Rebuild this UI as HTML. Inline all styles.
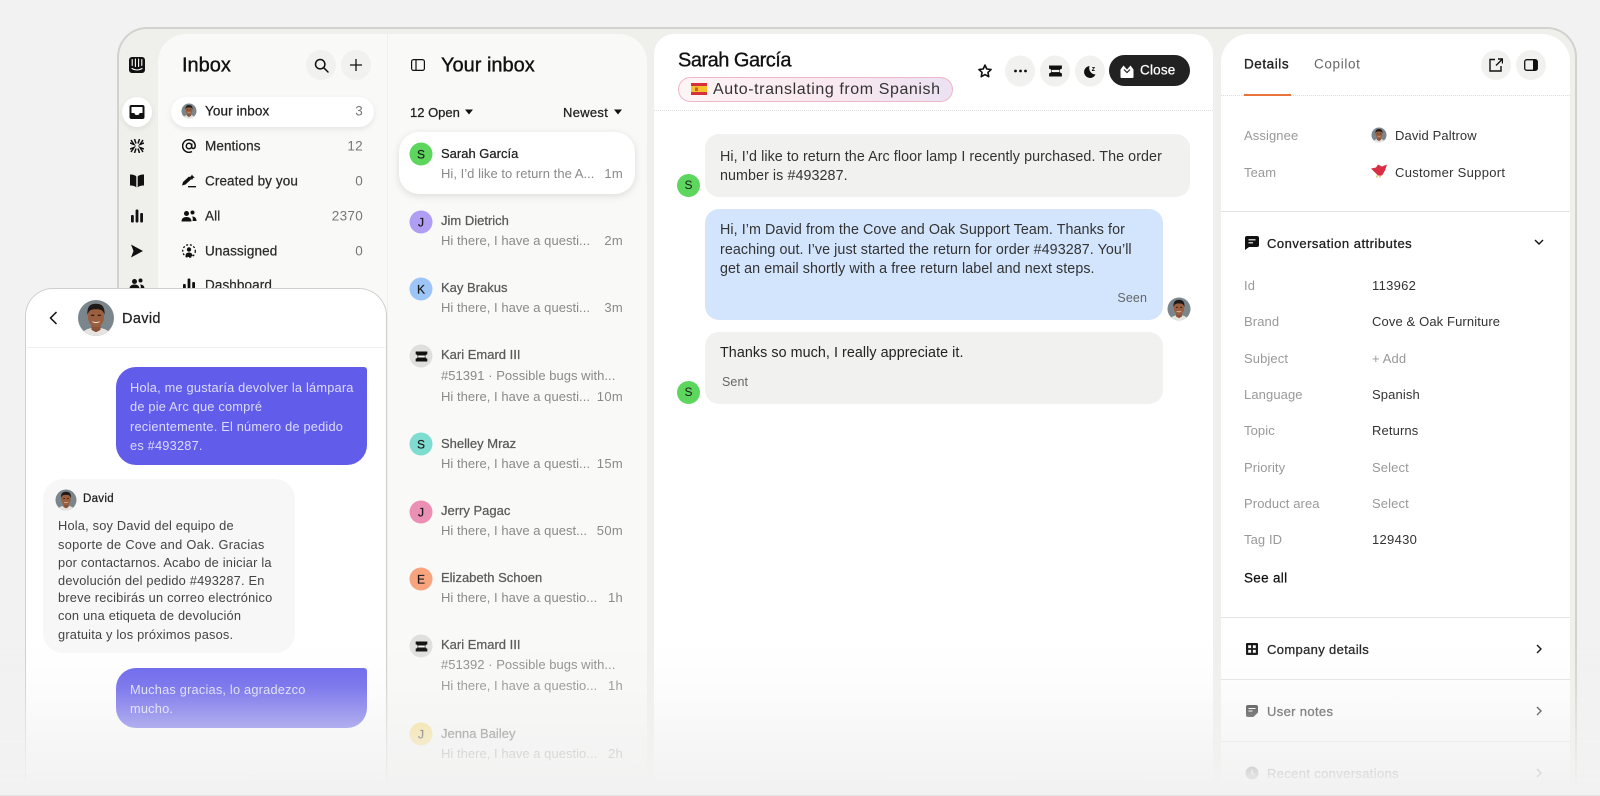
<!DOCTYPE html>
<html><head><meta charset="utf-8"><title>Inbox</title>
<style>
*{box-sizing:border-box}
html,body{margin:0;padding:0;width:1600px;height:796px;overflow:hidden;background:#f2f2f2}
body{position:relative;font-family:"Liberation Sans",sans-serif;color:#1a1a1a}
#w{position:absolute;left:0;top:0;width:1600px;height:796px;overflow:hidden;filter:blur(.3px)}
.a{position:absolute}
.t{position:absolute;white-space:nowrap;transform:translateY(calc(-50% + .7px));line-height:1.2;font-size:13.5px;letter-spacing:.1px}
.r{transform:translate(-100%,calc(-50% + .7px))}
.md{-webkit-text-stroke:.25px currentColor}
.h{font-size:20px;letter-spacing:0;-webkit-text-stroke:.35px currentColor;color:#111}
.c{position:absolute;border-radius:50%;display:flex;align-items:center;justify-content:center}
.btn{width:30px;height:30px;background:#f1f1ef;transform:translate(-50%,-50%)}
svg{display:block}
.ic{position:absolute;transform:translate(-50%,-50%)}
.n{left:205px;color:#2b2b2b}
.ct{left:363px;color:#777;letter-spacing:.3px}
.av{width:23px;height:23px;left:421px;transform:translate(-50%,-50%);font-size:12px;color:#1a1a1a;-webkit-text-stroke:.2px #1a1a1a}
.nm{left:441px;font-size:13px;color:#5a5a5a;-webkit-text-stroke:.25px #5a5a5a;letter-spacing:0}
.sb{left:441px;font-size:13px;color:#8a8a8a;letter-spacing:.03px}
.tm{left:623px;font-size:13px;color:#8a8a8a;letter-spacing:.3px}
.m{font-size:14.3px;color:#333;letter-spacing:.07px}
.bub{position:absolute}
.wt{font-size:12.8px;letter-spacing:.2px}
.l{left:1244px;color:#999;font-size:13px;letter-spacing:.1px}
.v{left:1372px;color:#333;font-size:13px;letter-spacing:.12px}
.s{left:1267px;font-size:13px;-webkit-text-stroke:.3px currentColor;letter-spacing:.35px}
.hr{position:absolute;left:1221px;width:349px;height:1px;background:#e4e4e2}
</style></head><body>
<svg width="0" height="0" style="position:absolute"><defs>
<clipPath id="cc"><circle cx="12" cy="12" r="12"/></clipPath>
<symbol id="face" viewBox="0 0 24 24">
<g clip-path="url(#cc)">
<rect width="24" height="24" fill="#7b868c"/>
<path d="M2 24c1-4 5-5.500 10-5.500s9 1.500 10 5.500z" fill="#e6e4e0"/>
<path d="M9 15h6v5l-3 1.500-3-1.500z" fill="#8a5236"/>
<ellipse cx="12" cy="11" rx="5.400" ry="7.200" fill="#9a5f3e"/>
<path d="M6.300 10C5.800 3.500 9 2.500 12 2.500s6.200 1 5.700 7.500c-1-3-2-3.800-5.700-3.800S7.300 7 6.300 10z" fill="#1f1a18"/>
<path d="M9.300 14c1.500 1 3.900 1 5.400 0-.5 1.800-4.900 1.800-5.400 0z" fill="#f3eee8"/>
<rect x="8.800" y="9.800" width="2" height=".9" fill="#2a1a12"/><rect x="13.200" y="9.800" width="2" height=".9" fill="#2a1a12"/>
</g>
</symbol>
<symbol id="ticket" viewBox="0 0 16 12">
<path d="M1 0h14v3.500a2.500 2.500 0 0 0 0 5V12H1V8.500a2.500 2.500 0 0 0 0-5z" fill="#111"/><rect x="4" y="4.800" width="8" height="2.400" fill="#fff" opacity=".95"/>
</symbol>
</defs></svg>
<div id="w">
<!-- frame -->
<div class="a" style="left:117px;top:27px;width:1460px;height:769px;background:#efefeb;border:2px solid #d2d2ce;border-bottom:none;border-radius:30px 30px 0 0"></div>
<!-- panels -->
<div class="a" style="left:158px;top:34px;width:229px;height:762px;background:#f9f9f7;border-radius:28px 0 0 0"></div>
<div class="a" style="left:388px;top:34px;width:259px;height:762px;background:#f9f9f7;border-radius:0 28px 0 0"></div>
<div class="a" style="left:654px;top:34px;width:559px;height:762px;background:#fff;border-radius:20px 20px 0 0"></div>
<div class="a" style="left:1221px;top:34px;width:349px;height:762px;background:#fff;border-radius:28px 28px 0 0"></div>

<!-- rail -->
<svg class="ic" style="left:137px;top:65px" width="16" height="16" viewBox="0 0 16 16"><rect width="16" height="16" rx="3" fill="#111"/><path d="M3.200 2.500v6M6.400 2v7.500M9.600 2v7.500M12.800 2.500v6" stroke="#fff" stroke-width="1.100" stroke-linecap="round"/><path d="M3 11.500c3 2 7 2 10 0" stroke="#fff" stroke-width="1.100" fill="none" stroke-linecap="round"/></svg>
<div class="c" style="left:122px;top:97px;width:30px;height:30px;background:#fff;box-shadow:0 2px 6px rgba(0,0,0,.08)"></div>
<svg class="ic" style="left:137px;top:112px" width="15" height="14" viewBox="0 0 15 14"><path d="M2 0h11a2 2 0 0 1 2 2v10a2 2 0 0 1-2 2H2a2 2 0 0 1-2-2V2a2 2 0 0 1 2-2z" fill="#111"/><path d="M2 2h11v6H10c0 1.500-1 2-2.500 2S5 9.500 5 8H2z" fill="#fff"/></svg>
<svg class="ic" style="left:137px;top:146px" width="14" height="14" viewBox="0 0 14 14" stroke="#111" stroke-width="1.500" fill="none"><path d="M0 4l4 1.500L1 1M14 4l-4 1.500L13 1M0 10l4-1.500L1 13M14 10l-4-1.500L13 13M4.500 0l1.500 4.500M9.500 0L8 4.500M4.500 14L6 9.500M9.500 14L8 9.500"/></svg>
<svg class="ic" style="left:137px;top:181px" width="14" height="13" viewBox="0 0 14 13"><path d="M0 0c3 0 5 .5 6.300 2v11C5 11.500 3 11 0 11zM14 0c-3 0-5 .5-6.300 2v11c1.300-1.500 3.300-2 6.300-2z" fill="#111"/></svg>
<svg class="ic" style="left:137px;top:216px" width="12" height="13" viewBox="0 0 12 13" fill="#111"><rect y="5.500" width="2.800" height="7.500" rx="1"/><rect x="4.600" width="2.800" height="13" rx="1"/><rect x="9.200" y="3.500" width="2.800" height="9.500" rx="1"/></svg>
<svg class="ic" style="left:137px;top:251px" width="12" height="13" viewBox="0 0 12 13"><path d="M0 0l12 6.500L0 13l2.500-6.500z" fill="#111"/></svg>
<svg class="ic" style="left:137px;top:284px" width="15" height="12" viewBox="0 0 15 12" fill="#111"><circle cx="5" cy="3.500" r="2.500"/><circle cx="11" cy="2.500" r="2"/><path d="M0 11c0-3 2-4.500 5-4.500s5 1.500 5 4.500zM11 11h4c0-3-1.500-4.500-4.500-4.500 1 1 1 2.500.5 4.500z"/></svg>

<!-- inbox column -->
<div class="t h" style="left:182px;top:65px">Inbox</div>
<div class="c btn" style="left:321px;top:65px"><svg width="15" height="15" viewBox="0 0 15 15" fill="none" stroke="#111" stroke-width="1.500"><circle cx="6.200" cy="6.200" r="4.700"/><path d="M9.700 9.700L14 14" stroke-linecap="round"/></svg></div>
<div class="c btn" style="left:356px;top:65px"><svg width="12" height="12" viewBox="0 0 12 12" stroke="#111" stroke-width="1.300"><path d="M6 0v12M0 6h12"/></svg></div>

<div class="a" style="left:171px;top:97px;width:203px;height:30px;background:#fff;border-radius:15px;box-shadow:0 2px 6px rgba(0,0,0,.09)"></div>
<svg class="ic" style="left:189px;top:111px" width="15" height="15"><use href="#face"/></svg>
<div class="t n md" style="top:111px;color:#222">Your inbox</div><div class="t r ct" style="top:111px">3</div>
<svg class="ic" style="left:189px;top:146px" width="14" height="14" viewBox="0 0 14 14" fill="none" stroke="#111" stroke-width="1.500"><circle cx="7" cy="7" r="2.700"/><path d="M9.700 4.500v3.500c0 2.200 3.500 2 3.500-1A6.300 6.300 0 1 0 10 12.500"/></svg>
<div class="t n md" style="top:146px">Mentions</div><div class="t r ct" style="top:146px">12</div>
<svg class="ic" style="left:189px;top:181px" width="14" height="13" viewBox="0 0 14 13" fill="#111"><path d="M0 11l1-3.500L7 2l2.500 2.500L3.500 10zM10 0l1 1.800 1.800 1-1.800 1-1 1.800-1-1.800-1.800-1 1.800-1zM6 11.500h8v1.400H6z"/></svg>
<div class="t n md" style="top:181px">Created by you</div><div class="t r ct" style="top:181px">0</div>
<svg class="ic" style="left:189px;top:216px" width="15" height="12" viewBox="0 0 15 12" fill="#111"><circle cx="5" cy="3.500" r="2.500"/><circle cx="11" cy="2.500" r="2"/><path d="M0 11.500c0-3 2-4.500 5-4.500s5 1.500 5 4.500zM11 11h4c0-3-1.500-4.500-4.500-4.500 1 1 1 2.500.5 4.500z"/></svg>
<div class="t n md" style="top:216px">All</div><div class="t r ct" style="top:216px">2370</div>
<svg class="ic" style="left:189px;top:251px" width="14" height="14" viewBox="0 0 14 14" fill="#111"><circle cx="7" cy="5.500" r="2.200"/><path d="M3.500 12c0-2.500 1.500-3.500 3.500-3.500s3.500 1 3.500 3.500c-2 1.300-5 1.300-7 0z"/><circle cx="7" cy="7" r="6.300" fill="none" stroke="#111" stroke-width="1.300" stroke-dasharray="2 1.800"/></svg>
<div class="t n md" style="top:251px">Unassigned</div><div class="t r ct" style="top:251px">0</div>
<svg class="ic" style="left:189px;top:285px" width="12" height="13" viewBox="0 0 12 13" fill="#111"><rect y="5.500" width="2.800" height="7.500" rx="1"/><rect x="4.600" width="2.800" height="13" rx="1"/><rect x="9.200" y="3.500" width="2.800" height="9.500" rx="1"/></svg>
<div class="t n md" style="top:285px">Dashboard</div>

<!-- list column -->
<svg class="ic" style="left:418px;top:65px" width="14" height="12" viewBox="0 0 14 12" fill="none" stroke="#111" stroke-width="1.200"><rect x=".6" y=".6" width="12.800" height="10.800" rx="2"/><path d="M5 .6v10.800"/></svg>
<div class="t h" style="left:441px;top:65px">Your inbox</div>
<div class="t md" style="left:410px;top:112px;font-size:13px;color:#222;letter-spacing:0">12 Open</div>
<svg class="ic" style="left:469px;top:112px" width="8" height="5"><path d="M0 0h8L4 5z" fill="#111"/></svg>
<div class="t md" style="left:563px;top:112px;font-size:13px;color:#222;letter-spacing:.3px">Newest</div>
<svg class="ic" style="left:618px;top:112px" width="8" height="5"><path d="M0 0h8L4 5z" fill="#111"/></svg>

<div class="a" style="left:399px;top:132px;width:236px;height:62px;background:#fff;border-radius:20px;box-shadow:0 2px 8px rgba(0,0,0,.12)"></div>
<div class="c av" style="top:154px;background:#5cd65c">S</div>
<div class="t nm" style="top:152.500px;color:#222;-webkit-text-stroke-color:#222">Sarah García</div>
<div class="t sb" style="top:173px">Hi, I’d like to return the A...</div><div class="t r tm" style="top:173px">1m</div>

<div class="c av" style="top:222px;background:#b09ef5">J</div>
<div class="t nm" style="top:219.500px">Jim Dietrich</div>
<div class="t sb" style="top:240px">Hi there, I have a questi...</div><div class="t r tm" style="top:240px">2m</div>

<div class="c av" style="top:289px;background:#9ec5f8">K</div>
<div class="t nm" style="top:286.500px">Kay Brakus</div>
<div class="t sb" style="top:307px">Hi there, I have a questi...</div><div class="t r tm" style="top:307px">3m</div>

<div class="c av" style="top:356px;background:#dfdfdd"><svg width="14" height="10"><use href="#ticket"/></svg></div>
<div class="t nm" style="top:353.500px">Kari Emard III</div>
<div class="t sb" style="top:374.500px">#51391 · Possible bugs with...</div>
<div class="t sb" style="top:395.500px">Hi there, I have a questi...</div><div class="t r tm" style="top:395.500px">10m</div>

<div class="c av" style="top:444px;background:#7fdcd0">S</div>
<div class="t nm" style="top:442.500px">Shelley Mraz</div>
<div class="t sb" style="top:462.500px">Hi there, I have a questi...</div><div class="t r tm" style="top:462.500px">15m</div>

<div class="c av" style="top:512px;background:#ec8fb4">J</div>
<div class="t nm" style="top:509.500px">Jerry Pagac</div>
<div class="t sb" style="top:529.500px">Hi there, I have a quest...</div><div class="t r tm" style="top:529.500px">50m</div>

<div class="c av" style="top:579px;background:#f8a47e">E</div>
<div class="t nm" style="top:576.500px">Elizabeth Schoen</div>
<div class="t sb" style="top:596.500px">Hi there, I have a questio...</div><div class="t r tm" style="top:596.500px">1h</div>

<div class="c av" style="top:646px;background:#dfdfdd"><svg width="14" height="10"><use href="#ticket"/></svg></div>
<div class="t nm" style="top:643.500px">Kari Emard III</div>
<div class="t sb" style="top:664px">#51392 · Possible bugs with...</div>
<div class="t sb" style="top:684.500px">Hi there, I have a questio...</div><div class="t r tm" style="top:684.500px">1h</div>

<div class="c av" style="top:734px;background:#f6dc7c">J</div>
<div class="t nm" style="top:732.500px">Jenna Bailey</div>
<div class="t sb" style="top:752.500px">Hi there, I have a questio...</div><div class="t r tm" style="top:752.500px">2h</div>

<!-- conversation -->
<div class="t h" style="left:678px;top:60px;letter-spacing:-.5px">Sarah García</div>
<div class="a" style="left:678px;top:77px;width:275px;height:24.500px;border-radius:13px;background:linear-gradient(90deg,#fdf5f6,#f9e8ef 55%,#ece2f2);border:1px solid #eeb7c9"></div>
<svg class="a" style="left:691px;top:83px" width="16" height="12" viewBox="0 0 16 12"><rect width="16" height="12" fill="#d6303a"/><rect y="3" width="16" height="6" fill="#f7c12e"/><rect x="4" y="4.500" width="3" height="3.500" fill="#c8602a"/></svg>
<div class="t" style="left:713px;top:88.500px;font-size:16px;letter-spacing:.58px;color:#333">Auto-translating from Spanish</div>
<svg class="ic" style="left:985px;top:71px" width="15" height="15" viewBox="0 0 24 24" fill="none" stroke="#111" stroke-width="2.600" stroke-linejoin="round"><path d="M12 2.500l2.900 6.300 6.800.8-5 4.700 1.300 6.800-6-3.400-6 3.400 1.300-6.800-5-4.700 6.800-.8z"/></svg>
<div class="c btn" style="left:1020px;top:71px;height:31px;width:30px"><svg width="13" height="3" fill="#111"><circle cx="1.500" cy="1.500" r="1.400"/><circle cx="6.500" cy="1.500" r="1.400"/><circle cx="11.500" cy="1.500" r="1.400"/></svg></div>
<div class="c btn" style="left:1055px;top:71px;height:31px;width:30px"><svg width="15" height="11"><use href="#ticket"/></svg></div>
<div class="c btn" style="left:1090px;top:71px;height:31px;width:30px"><svg width="14" height="14" viewBox="0 0 14 14" fill="#111"><path d="M6.500 1.500a6 6 0 1 0 6 8.500 6.500 6.500 0 0 1-6-8.500z"/><text x="8.600" y="6.500" font-size="7" font-family="Liberation Sans" font-weight="700">z</text></svg></div>
<div class="a" style="left:1109px;top:55px;width:81px;height:31px;background:#222;border-radius:16px"></div>
<svg class="ic" style="left:1127px;top:70.500px" width="15" height="14" viewBox="0 0 15 14"><path d="M1 5.500L4 1.500l3.500 4 3.500-4 3 4V13a1 1 0 0 1-1 1H2a1 1 0 0 1-1-1z" fill="#fff"/><path d="M4.500 5.500l3 3 3-3" stroke="#222" stroke-width="1.200" fill="none"/></svg>
<div class="t md" style="left:1140px;top:70px;color:#fff;font-size:13.500px;letter-spacing:.2px">Close</div>
<div class="a" style="left:654px;top:110px;width:559px;height:0;border-top:1px dotted #dcdcdc"></div>

<div class="bub" style="left:705px;top:134px;width:485px;height:62.500px;background:#f1f1ef;border-radius:14px"></div>
<div class="t m" style="left:720px;top:156.500px">Hi, I’d like to return the Arc floor lamp I recently purchased. The order</div>
<div class="t m" style="left:720px;top:176px">number is #493287.</div>
<div class="c" style="left:677px;top:173.500px;width:23px;height:23px;background:#5cd65c;font-size:12px">S</div>

<div class="bub" style="left:705px;top:209px;width:458px;height:111px;background:#d3e5fd;border-radius:14px"></div>
<div class="t m" style="left:720px;top:230px">Hi, I’m David from the Cove and Oak Support Team. Thanks for</div>
<div class="t m" style="left:720px;top:249.500px">reaching out. I’ve just started the return for order #493287. You’ll</div>
<div class="t m" style="left:720px;top:269px">get an email shortly with a free return label and next steps.</div>
<div class="t r" style="left:1147px;top:298px;font-size:12.500px;color:#666">Seen</div>
<svg class="ic" style="left:1178.500px;top:308.500px" width="23" height="23"><use href="#face"/></svg>

<div class="bub" style="left:705px;top:332px;width:458px;height:72px;background:#f1f1ef;border-radius:14px"></div>
<div class="t m" style="left:720px;top:353px;color:#222">Thanks so much, I really appreciate it.</div>
<div class="t" style="left:722px;top:382px;font-size:12.500px;color:#666">Sent</div>
<div class="c" style="left:677px;top:380.500px;width:23px;height:23px;background:#5cd65c;font-size:12px">S</div>

<!-- right panel -->
<div class="t" style="left:1244px;top:64px;font-size:13.500px;-webkit-text-stroke:.35px #222;color:#222;letter-spacing:.55px">Details</div>
<div class="t" style="left:1314px;top:64px;font-size:13.500px;color:#666;letter-spacing:.65px">Copilot</div>
<div class="a" style="left:1221px;top:95px;width:349px;height:0;border-top:1px dotted #dcdcdc"></div>
<div class="a" style="left:1244px;top:94px;width:47px;height:2px;background:#e8743c"></div>
<div class="c btn" style="left:1496px;top:65px"><svg width="14" height="14" viewBox="0 0 14 14" fill="none" stroke="#111" stroke-width="1.400"><path d="M6 1.500H1v11.500h11V8M7 7.500L13 1.500M9 1h4.500v4.500"/></svg></div>
<div class="c btn" style="left:1531px;top:65px"><svg width="14" height="12" viewBox="0 0 14 12" fill="none" stroke="#111" stroke-width="1.300"><rect x=".7" y=".7" width="12.600" height="10.600" rx="2"/><rect x="9" y="1" width="4" height="10" fill="#111" stroke="none"/></svg></div>

<div class="t l" style="top:135px">Assignee</div>
<svg class="ic" style="left:1379px;top:135px" width="15" height="15"><use href="#face"/></svg>
<div class="t v" style="left:1395px;top:135px">David Paltrow</div>
<div class="t l" style="top:171.500px">Team</div>
<svg class="ic" style="left:1379px;top:171px" width="16" height="15" viewBox="0 0 16 15"><path d="M0 5l5-1 2-3 4 2 5-2-2 6-3 5H7L3 8z" fill="#d92f45"/><path d="M6 12v2M9 12v2" stroke="#e8a33c" stroke-width="1.200"/></svg>
<div class="t v" style="left:1395px;top:171.500px;letter-spacing:.3px">Customer Support</div>
<div class="hr" style="top:211px"></div>

<svg class="ic" style="left:1252px;top:243px" width="14" height="14" viewBox="0 0 14 14"><path d="M2 0h10a2 2 0 0 1 2 2v7a2 2 0 0 1-2 2H4l-4 3V2a2 2 0 0 1 2-2z" fill="#111"/><path d="M3.500 3.800h7M3.500 6.800h4.500" stroke="#fff" stroke-width="1.200"/></svg>
<div class="t s" style="top:242.500px;color:#222;letter-spacing:.5px">Conversation attributes</div>
<svg class="ic" style="left:1539px;top:242px" width="10" height="6" viewBox="0 0 10 6" fill="none" stroke="#111" stroke-width="1.400"><path d="M1 1l4 4 4-4"/></svg>

<div class="t l" style="top:284.500px">Id</div><div class="t v" style="top:284.500px;letter-spacing:.3px">113962</div>
<div class="t l" style="top:321px">Brand</div><div class="t v" style="top:321px">Cove &amp; Oak Furniture</div>
<div class="t l" style="top:358px">Subject</div><div class="t v" style="top:358px;color:#999">+ Add</div>
<div class="t l" style="top:394px">Language</div><div class="t v" style="top:394px">Spanish</div>
<div class="t l" style="top:430px">Topic</div><div class="t v" style="top:430px">Returns</div>
<div class="t l" style="top:466.500px">Priority</div><div class="t v" style="top:466.500px;color:#999">Select</div>
<div class="t l" style="top:503px">Product area</div><div class="t v" style="top:503px;color:#999">Select</div>
<div class="t l" style="top:539px">Tag ID</div><div class="t v" style="top:539px;letter-spacing:.3px">129430</div>
<div class="t md" style="left:1244px;top:578px;font-size:13.500px;color:#111;letter-spacing:.3px">See all</div>
<div class="hr" style="top:617px"></div>
<svg class="ic" style="left:1251.500px;top:648.500px" width="12" height="12" viewBox="0 0 12 12"><rect width="12" height="12" rx="1" fill="#111"/><path d="M2.200 2.200h2.900v2.900H2.200zM6.900 2.200h2.900v2.900H6.900zM2.200 6.900h2.900v2.900H2.200zM6.900 6.900h2.900v2.900H6.900z" fill="#fff"/></svg>
<div class="t s" style="top:648.500px;color:#222">Company details</div>
<svg class="ic" style="left:1539px;top:649px" width="6" height="10" viewBox="0 0 6 10" fill="none" stroke="#111" stroke-width="1.400"><path d="M1 1l4 4-4 4"/></svg>
<div class="hr" style="top:679px"></div>
<svg class="ic" style="left:1251.500px;top:710.500px" width="12" height="12" viewBox="0 0 12 12"><path d="M2 0h8a2 2 0 0 1 2 2v5.500L7.500 12H2a2 2 0 0 1-2-2V2a2 2 0 0 1 2-2z" fill="#222"/><path d="M2.500 3.500h7M2.500 6h4" stroke="#fff" stroke-width="1.100"/></svg>
<div class="t s" style="top:710.500px;color:#333">User notes</div>
<svg class="ic" style="left:1539px;top:711px" width="6" height="10" viewBox="0 0 6 10" fill="none" stroke="#111" stroke-width="1.400"><path d="M1 1l4 4-4 4"/></svg>
<div class="hr" style="top:741px"></div>
<svg class="ic" style="left:1251.500px;top:773px" width="13" height="13" viewBox="0 0 13 13"><circle cx="6.500" cy="6.500" r="6.500" fill="#333"/><path d="M6.500 3v4l2.500 1.500" stroke="#fff" stroke-width="1.100" fill="none"/></svg>
<div class="t s" style="top:772.500px;color:#333">Recent conversations</div>
<svg class="ic" style="left:1539px;top:773px" width="6" height="10" viewBox="0 0 6 10" fill="none" stroke="#111" stroke-width="1.400"><path d="M1 1l4 4-4 4"/></svg>

<!-- chat widget -->
<div class="a" style="left:25px;top:288px;width:362px;height:508px;background:#fff;border:1.500px solid #cfcfcd;border-bottom:none;border-radius:28px 28px 0 0"></div>
<div class="a" style="left:27px;top:347px;width:358px;height:1px;background:#f0f0f0"></div>
<svg class="ic" style="left:53px;top:318px" width="9" height="14" viewBox="0 0 9 14" fill="none" stroke="#111" stroke-width="1.500"><path d="M8 1L2 7l6 6"/></svg>
<svg class="ic" style="left:96px;top:318px" width="36" height="36"><use href="#face"/></svg>
<div class="t md" style="left:122px;top:319px;font-size:14.500px;color:#222;letter-spacing:.35px">David</div>

<div class="bub" style="left:116px;top:367px;width:251px;height:98px;background:#625ceb;border-radius:20px 3px 20px 20px"></div>
<div class="t wt" style="left:130px;top:387px;color:#dcdcfa">Hola, me gustaría devolver la lámpara</div>
<div class="t wt" style="left:130px;top:406px;color:#dcdcfa">de pie Arc que compré</div>
<div class="t wt" style="left:130px;top:425.500px;color:#dcdcfa">recientemente. El número de pedido</div>
<div class="t wt" style="left:130px;top:444.500px;color:#dcdcfa">es #493287.</div>

<div class="bub" style="left:43px;top:479px;width:252px;height:174px;background:#f7f7f7;border-radius:20px"></div>
<svg class="ic" style="left:66px;top:500px" width="21" height="21"><use href="#face"/></svg>
<div class="t md" style="left:83px;top:499px;font-size:11.500px;color:#222;letter-spacing:.3px">David</div>
<div class="t wt" style="left:58px;top:524.500px;color:#444">Hola, soy David del equipo de</div>
<div class="t wt" style="left:58px;top:543.500px;color:#444;letter-spacing:.3px">soporte de Cove and Oak. Gracias</div>
<div class="t wt" style="left:58px;top:561.500px;color:#444">por contactarnos. Acabo de iniciar la</div>
<div class="t wt" style="left:58px;top:579.500px;color:#444">devolución del pedido #493287. En</div>
<div class="t wt" style="left:58px;top:597px;color:#444">breve recibirás un correo electrónico</div>
<div class="t wt" style="left:58px;top:614.500px;color:#444">con una etiqueta de devolución</div>
<div class="t wt" style="left:58px;top:633.500px;color:#444">gratuita y los próximos pasos.</div>

<div class="bub" style="left:116px;top:668px;width:251px;height:60px;background:#625ceb;border-radius:20px 3px 20px 20px"></div>
<div class="t wt" style="left:130px;top:689px;color:#dcdcfa">Muchas gracias, lo agradezco</div>
<div class="t wt" style="left:130px;top:708px;color:#dcdcfa">mucho.</div>

<!-- fade -->
<div class="a" style="left:0;top:640px;width:1600px;height:156px;background:linear-gradient(180deg,rgba(242,242,242,0) 0%,rgba(242,242,242,.2) 30%,rgba(242,242,242,.6) 60%,#f2f2f2 95%)"></div>
<div class="a" style="left:0;top:795px;width:1600px;height:1px;background:#e2e2e2"></div>
</div>
</body></html>
